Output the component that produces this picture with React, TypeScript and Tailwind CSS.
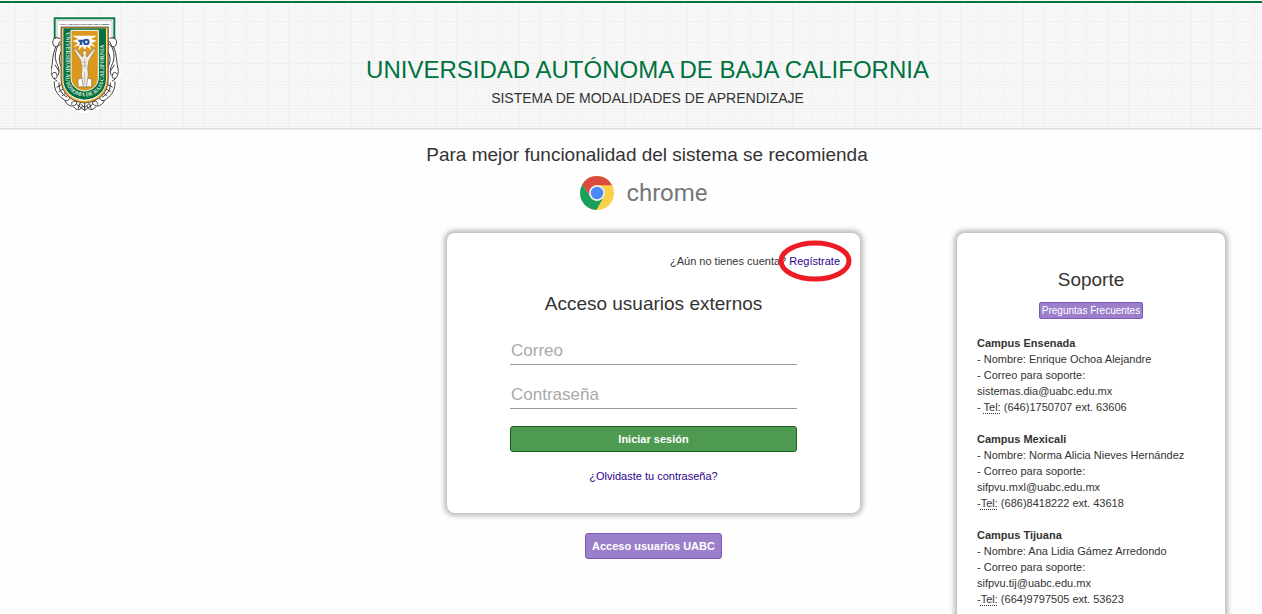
import { useState } from 'react';
import type { ReactNode } from 'react';

const campuses = [
  {
    name: 'Campus Ensenada',
    contact: 'Enrique Ochoa Alejandre',
    email: 'sistemas.dia@uabc.edu.mx',
    dash: '- ',
    phone: '(646)1750707 ext. 63606',
  },
  {
    name: 'Campus Mexicali',
    contact: 'Norma Alicia Nieves Hernández',
    email: 'sifpvu.mxl@uabc.edu.mx',
    dash: '-',
    phone: '(686)8418222 ext. 43618',
  },
  {
    name: 'Campus Tijuana',
    contact: 'Ana Lidia Gámez Arredondo',
    email: 'sifpvu.tij@uabc.edu.mx',
    dash: '-',
    phone: '(664)9797505 ext. 53623',
  },
];

function Crest() {
  return (
    <svg viewBox="36 46 213 297" className="w-[71px] h-[99px] shrink-0" role="img" aria-label="UABC">
      {/* white silhouette */}
      <path
        d="M41 50H233V112C246 135 240 160 238 178C250 205 246 225 240 242C238 285 205 318 166 336Q139 346 112 336C75 318 42 285 38 242C30 225 28 205 40 178C38 160 30 135 41 112Z"
        fill="#fff"
      />

      {/* motto ribbon */}
      <path d="M47 118V56H226V118" fill="none" stroke="#0b7a47" strokeWidth="6" />
      <path d="M54 116V63H219V116" fill="none" stroke="#9aa09c" strokeWidth="2" />
      <text x="137" y="75" textAnchor="middle" fontSize="7" fontWeight="700" fill="#222" className="font-['Liberation_Sans',Arial,sans-serif]">
        POR LA REALIZACIÓN PLENA DEL HOMBRE
      </text>

      {/* side dolphins */}
      {['', 'translate(274 0) scale(-1 1)'].map((side) => (
        <g key={side} transform={side || undefined} fill="none" stroke="#3a3a3a" strokeWidth="3" strokeLinecap="round">
          <path d="M62 116C44 108 38 124 43 136C48 146 58 140 66 132" />
          <path d="M62 126C50 150 45 168 52 188C57 200 63 208 58 226" />
          <path d="M50 142C40 166 42 182 38 202C32 220 40 238 54 244" />
          <path d="M66 158C56 176 62 196 70 206M48 196L60 214M40 222Q50 212 54 226Q56 238 46 236" />
          <path d="M46 246C44 266 54 286 72 298C80 306 92 304 92 294" />
          <path d="M60 250C58 268 68 284 84 292M54 262L66 256M60 276L72 268M70 288L80 280" />
          <path d="M78 304C88 324 108 322 114 310C110 300 96 304 98 314" />
          <path d="M104 322C114 334 126 332 130 320M118 326L122 312" />
        </g>
      ))}
      <path d="M113 314L137 332L161 314M124 312L137 324L150 312M137 306V334" fill="none" stroke="#3a3a3a" strokeWidth="3" />

      {/* shield */}
      <path d="M66 82H208V238C208 280 178 308 137 310C96 308 66 280 66 238Z" fill="#e6a024" stroke="#222" strokeWidth="2" />
      <path d="M71 86H203V238C203 276 175 302 137 304C99 302 71 276 71 238Z" fill="#fff" />
      <path d="M73 86H201V238C201 275 174 298 137 300C100 298 73 275 73 238Z" fill="#08703f" />
      <path d="M96 92H178V232C178 257 162 272 137 274C112 272 96 257 96 232Z" fill="#dc981d" stroke="#fff" strokeWidth="3" />

      <path id="crest-legend" d="M80 98V236C80 270 106 290 137 290C168 290 194 270 194 236V94" fill="none" />
      <text
        fontSize="17"
        fontWeight="700"
        fill="#d9eadf"
        className="font-['Liberation_Serif',serif]"
      >
        <textPath href="#crest-legend">UNIVERSIDAD AUTÓNOMA DE BAJA CALIFORNIA</textPath>
      </text>

      {/* eye and rays */}
      <path
        d="M100 108L118 118L101 124L117 130L104 142L122 136L118 152L130 140L137 150L144 140L156 152L152 136L170 142L157 130L173 124L156 118L174 108Z"
        fill="#fff"
      />
      <path d="M116 124Q137 106 158 124Q148 140 137 140Q126 140 116 124Z" fill="#fff" />
      <path d="M118 120H136V126H130V136H122V126H118Z" fill="#27539b" />
      <circle cx="142" cy="127" r="10" fill="#27539b" />
      <circle cx="142" cy="127" r="4" fill="#c9dcf4" />

      {/* open book */}
      <path d="M117 238Q128 233 137 240Q146 233 158 238V263Q146 258 137 264Q128 258 117 263Z" fill="#fff" stroke="#8b6a25" strokeWidth="2" />
      {/* figure with raised arms */}
      <path
        d="M104 146L110 148L130 172L133 169L131 158Q137 148 143 158L141 169L144 172L164 148L170 146L166 156L150 182L146 205L148 225L142 262H133L127 225L129 205L125 182L108 156Z"
        fill="#f1ede3"
        stroke="#8a7b5c"
        strokeWidth="2"
      />
      <path d="M137 176V205M137 218V256M131 188H143M131 198H143" stroke="#a99b80" strokeWidth="2" />
    </svg>
  );
}

function ChromeLogo() {
  return (
    <div className="flex items-center gap-3">
      <svg viewBox="0 0 48 48" className="size-[34px]" aria-hidden="true">
        <circle cx="24" cy="24" r="24" fill="#fdd04a" />
        <path d="M24 13H45.3A24 24 0 0 0 3.2 12L14.5 29.5A11 11 0 0 1 24 13Z" fill="#db4a3e" />
        <path d="M3.2 12A24 24 0 0 0 23 48L33.5 29.5A11 11 0 0 1 14.5 29.5Z" fill="#17a05e" />
        <circle cx="24" cy="24" r="11" fill="#f3f3f3" />
        <circle cx="24" cy="24" r="8.8" fill="#4a8af4" />
      </svg>
      <span className="font-[Roboto,sans-serif] text-2xl leading-8 text-[#777]">chrome</span>
    </div>
  );
}

function Panel({ className, children }: { className: string; children: ReactNode }) {
  return (
    <div className={`rounded-lg bg-white px-5 shadow-[0_0_5px_3px_#bbb] ${className}`}>
      {children}
    </div>
  );
}

function LoginForm() {
  const [email, setEmail] = useState('');
  const [password, setPassword] = useState('');

  return (
    <Panel className="pt-5 pb-[29px]">
      <p className="text-right">
        ¿Aún no tienes cuenta?{' '}
        <a href="#registro" className="relative text-[#30008c]">
          Regístrate
          {/* hand-drawn highlight around the link */}
          <svg
            viewBox="0 0 74 42"
            className="pointer-events-none absolute top-1/2 left-1/2 h-[42px] w-[74px] max-w-none -translate-x-1/2 -translate-y-1/2"
            aria-hidden="true"
          >
            <ellipse cx="37" cy="21" rx="34" ry="18" fill="none" stroke="#ed1c24" strokeWidth="5" />
          </svg>
        </a>
      </p>
      <h2 className="mt-[23px] text-center text-[19px] leading-6">Acceso usuarios externos</h2>

      <form className="mx-[43px] mt-5 flex flex-col" onSubmit={(e) => e.preventDefault()}>
        <input
          type="email"
          aria-label="Correo"
          placeholder="Correo"
          value={email}
          onChange={(e) => setEmail(e.target.value)}
          className="h-[29px] w-full border-b border-[#999] px-px pt-px text-[17px] outline-none placeholder:text-[#a9a9a9]"
        />
        <input
          type="password"
          aria-label="Contraseña"
          placeholder="Contraseña"
          value={password}
          onChange={(e) => setPassword(e.target.value)}
          className="mt-[15px] h-[29px] w-full border-b border-[#999] px-px pt-px text-[17px] outline-none placeholder:text-[#a9a9a9]"
        />
        <button
          type="submit"
          className="mt-[17px] h-[26px] rounded-[3px] border border-[#1b5e20] bg-[#4e9a51] pb-px font-bold text-white"
        >
          Iniciar sesión
        </button>
      </form>

      <p className="mt-4 text-center">
        <a href="#recuperar" className="text-[#30008c]">
          ¿Olvidaste tu contraseña?
        </a>
      </p>
    </Panel>
  );
}

function Support() {
  return (
    <Panel className="pt-[35px] pb-8">
      <div className="text-center">
        <h2 className="text-[19px] leading-6">Soporte</h2>
        <button
          type="button"
          className="mx-auto mt-[10px] block h-[17px] rounded-[2px] border border-[#7e57b8] bg-[#9b7fca] px-0.5 text-[10px] leading-none text-white"
        >
          Preguntas Frecuentes
        </button>
      </div>
      <div className="mt-4 flex flex-col gap-4">
        {campuses.map((campus) => (
          <section key={campus.name}>
            <h3 className="font-bold">{campus.name}</h3>
            <p>- Nombre: {campus.contact}</p>
            <p>- Correo para soporte:</p>
            <p>{campus.email}</p>
            <p>
              {campus.dash}
              <abbr title="Teléfono" className="underline decoration-dotted underline-offset-2">
                Tel:
              </abbr>{' '}
              {campus.phone}
            </p>
          </section>
        ))}
      </div>
    </Panel>
  );
}

export default function App() {
  return (
    <div className="bg-[#fefefe] pt-px font-['Liberation_Sans',Arial,sans-serif] text-[11px] leading-4 text-[#333]">
      <header className="border-t-2 border-[#00723f] bg-[#f8f8f8] bg-[linear-gradient(#efefef_1px,transparent_1px),linear-gradient(90deg,#efefef_1px,transparent_1px),linear-gradient(#f5f5f5_1px,transparent_1px),linear-gradient(90deg,#f5f5f5_1px,transparent_1px)] bg-[size:21px_21px,21px_21px,3px_3px,3px_3px] bg-[position:15px_18px] shadow-[0_1px_2px_#ccc]">
        <div className="grid grid-cols-[1fr_auto_1fr] pt-3 pr-[18px] pb-[14px] pl-[51px]">
          <Crest />
          <div className="pt-[41px] text-center">
            <h1 className="text-2xl leading-7 text-[#00723f]">UNIVERSIDAD AUTÓNOMA DE BAJA CALIFORNIA</h1>
            <p className="mt-1 text-[14px] leading-5">SISTEMA DE MODALIDADES DE APRENDIZAJE</p>
          </div>
        </div>
      </header>

      <main>
        <div className="flex flex-col items-center pt-[15px] pl-8">
          <p className="text-[19px] leading-6">Para mejor funcionalidad del sistema se recomienda</p>
          <div className="mt-[9px] pr-1.5">
            <ChromeLogo />
          </div>
        </div>

        <div className="mt-[23px] grid grid-cols-[447fr_413fr_97fr_268fr_37fr] items-start">
          <div className="col-start-2 flex flex-col">
            <LoginForm />
            <button
              type="button"
              className="mt-5 h-[26px] self-center rounded-[3px] border border-[#7e57b8] bg-[#9b7fca] px-1.5 pb-px font-bold text-white"
            >
              Acceso usuarios UABC
            </button>
          </div>
          <aside className="col-start-4">
            <Support />
          </aside>
        </div>
      </main>
    </div>
  );
}
